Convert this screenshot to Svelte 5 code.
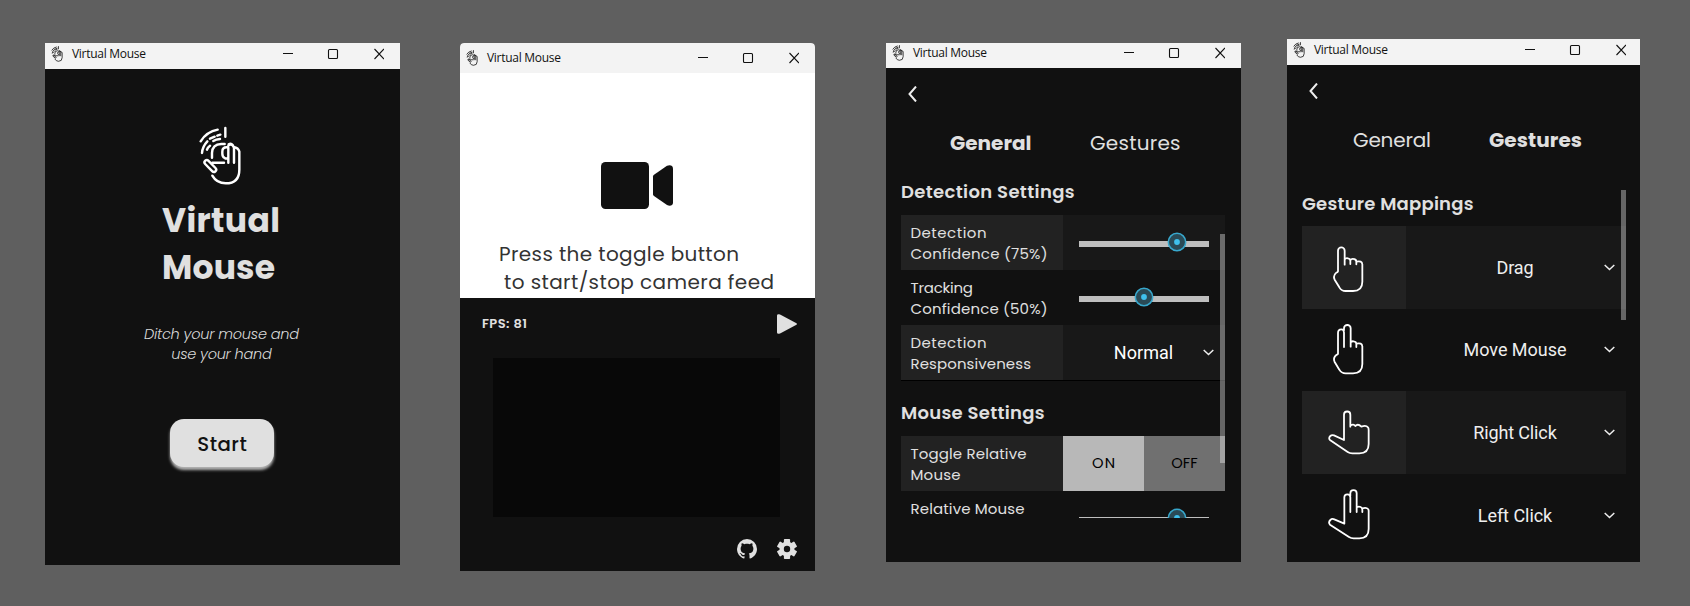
<script>
  const gestures = [
    {
      action: 'Drag', width: 37, view: '-24 -12 315 248',
      d: 'M84 124V62a10 10 0 0 1 20 0V104M104 88q4-5 10-3q7 1 7 8v9M121 91q4-6 10-4q8 1 8 8v8M139 95q17-4 18 8V155q0 28-28 28H107q-13 0-19-11L74 149q-6-12 5-21q5-1 5-5'
    },
    {
      action: 'Move Mouse', width: 103, view: '-24 236 315 248',
      d: 'M84 373V311q0-11 10-11q8 0 8 10V353M102 303V297a10 10 0 0 1 20 0V352M122 339q4-4 9-3q8 1 8 8v9M139 343q17-4 18 8V404q0 28-28 28H107q-13 0-19-11L74 398q-6-12 5-21q5-1 5-5'
    },
    {
      action: 'Right Click', width: 83.5, view: '81 303 315 248',
      d: 'M207 450V374a9.5 9.5 0 0 1 19 0V410M226 407q9-7 15 1q8-8 18 2q14-5 20 2q2 2 2 8V462q0 28-28 28H232q-8 0-14-4L166 451q-7-6 0-13q4-4 11-2L207 450'
    },
    {
      action: 'Left Click', width: 74.5, view: '81 551 315 248',
      d: 'M208 703V624q0-9 9-9q9 0 9 9V668M226 620V612a9.500 9.500 0 0 1 19 0V668M245 654q6-4 12-1q5 2 5 8v7M262 657q18-4 19 7V719q0 28-28 28H236q-8 0-14-4L165 706q-6-7 1-14q5-5 12-2L208 703'
    }
  ];

  // Spreads letters so that a line takes exactly the given width.
  function fit(node, width) {
    const natural = node.getBoundingClientRect().width;
    const step = (width - natural) / (node.textContent.length - 1);
    node.style.letterSpacing = `${step}px`;
    node.style.marginRight = `${-step}px`;
  }
</script>

{#snippet line(text, width)}<span class="line" use:fit={width}>{text}</span>{/snippet}

{#snippet hand(cls, stroke)}
  <svg class={cls} viewBox="57 33 126 180" fill="none" stroke="currentColor" stroke-width={stroke} stroke-linecap="round" stroke-linejoin="round">
    <path d="M136 39V65M62 79Q80 50 113 44M66 114Q67 95 82 79M81 104Q83 97 90 92M90 71l14-6M100 78q8-5 20-6M112 62l9-3" />
    <path d="M96 128V114Q97 88 124 87H134M97 143H132" />
    <rect x="69" y="146" width="44" height="14" rx="7" transform="rotate(46 91 153)" />
    <path d="M145 143V98M145 128q-5 5-11 1q-7-4-7-13v-6q0-13 13-13M145 92q7-7 13-1l4 7V143M146 88q10-6 15 8q14 2 17 14V164q0 41-41 41q-27 0-40-23" />
  </svg>
{/snippet}

{#snippet titlebar(height, offset)}
  <header class="titlebar" style="height:{height}px;padding-bottom:{offset}px">
    {@render hand('app-icon', 9)}
    <span class="app-name">{@render line('Virtual Mouse', 74)}</span>
    <svg class="controls" viewBox="0 0 101 12" fill="none" stroke="#111" stroke-width="1.100">
      <path d="M0 5.500H10M91.500 1L101 11M101 1L91.500 11" />
      <rect x="45.500" y="1.500" width="9" height="9" rx="1" />
    </svg>
  </header>
{/snippet}

{#snippet back()}
  <svg class="back" viewBox="0 0 9 16" fill="none" stroke="#eee" stroke-width="2"><path d="M8 .5L1.500 8L8 15.500" /></svg>
{/snippet}

{#snippet chevron()}
  <svg class="chevron" viewBox="0 0 11 7" fill="none" stroke="#eee" stroke-width="1.500"><path d="M.7 1L5.500 5.500L10.300 1" /></svg>
{/snippet}

{#snippet slider(value)}
  <div class="value slider">
    <div class="track">
      <svg class="thumb" style="left:{value}%" viewBox="0 0 20 20">
        <circle cx="10" cy="10" r="8.700" fill="#2a4a56" stroke="#38a8cd" stroke-width="1.500" />
        <circle cx="10" cy="10" r="2.900" fill="#3fc0ec" />
      </svg>
    </div>
  </div>
{/snippet}

<main>
  <section class="window w1">
    {@render titlebar(26, 5)}
    <div class="welcome">
      {@render hand('logo', 7.3)}
      <h1>{@render line('Virtual', 118)}<br />{@render line('Mouse', 113)}</h1>
      <p>{@render line('Ditch your mouse and', 155)}<br />{@render line('use your hand', 100.5)}</p>
      <button class="start">{@render line('Start', 49.5)}</button>
    </div>
  </section>

  <section class="window w2">
    {@render titlebar(30, 1)}
    <div class="feed">
      <svg class="camera" viewBox="0 0 72 47" fill="#111">
        <rect width="48" height="47" rx="4.500" />
        <path d="M52 14.500Q52 13.500 53 12.800L66 3.800Q69 2.500 71 4Q72 5 72 6.500V40.500Q72 42 71 43Q69 44.500 66 43L53 34Q52 33.300 52 32.500Z" />
      </svg>
      <div class="hint">{@render line('Press the toggle button', 240)}<br /><span class="indent">{@render line('to start/stop camera feed', 270)}</span></div>
    </div>
    <div class="panel">
      <div class="status">
        <span class="fps">{@render line('FPS: 81', 45)}</span>
        <svg width="20" height="20" viewBox="0 0 20 20" fill="#e0e0e0"><path d="M0 1.500Q0 0 2 .2Q3 .3 4 .9L19 8.900Q21 10 19 11.100L4 19.100Q3 19.700 2 19.800Q0 20 0 18.500Z" /></svg>
      </div>
      <div class="console"></div>
      <div class="links">
        <svg width="20" height="20" viewBox="2 2 20 20" fill="#e0e0e0"><path d="M12,2A10,10 0 0,0 2,12C2,16.42 4.87,20.17 8.84,21.5C9.34,21.58 9.5,21.27 9.5,21C9.5,20.77 9.5,20.14 9.5,19.31C6.73,19.91 6.14,17.97 6.14,17.97C5.68,16.81 5.03,16.5 5.03,16.5C4.12,15.88 5.1,15.9 5.1,15.9C6.1,15.97 6.63,16.93 6.63,16.93C7.5,18.45 8.97,18 9.54,17.76C9.63,17.11 9.89,16.67 10.17,16.42C7.95,16.17 5.62,15.31 5.62,11.5C5.62,10.39 6,9.5 6.65,8.79C6.55,8.54 6.2,7.5 6.75,6.15C6.75,6.15 7.59,5.88 9.5,7.17C10.29,6.95 11.15,6.84 12,6.84C12.85,6.84 13.71,6.95 14.5,7.17C16.41,5.88 17.25,6.15 17.25,6.15C17.8,7.5 17.45,8.54 17.35,8.79C18,9.5 18.38,10.39 18.38,11.5C18.38,15.32 16.04,16.16 13.81,16.41C14.17,16.72 14.5,17.33 14.5,18.26C14.5,19.6 14.5,20.68 14.5,21C14.5,21.27 14.66,21.59 15.17,21.5C19.14,20.16 22,16.42 22,12A10,10 0 0,0 12,2Z" /></svg>
        <svg width="20" height="20" viewBox="0 0 20 20" fill="#e0e0e0">
          <circle cx="10" cy="10" r="7.500" />
          {#each [0, 60, 120] as angle}
            <rect x="6.900" y="0" width="6.200" height="20" rx=".8" transform="rotate({angle} 10 10)" />
          {/each}
          <circle cx="10" cy="10" r="3.200" fill="#111" />
        </svg>
      </div>
    </div>
  </section>

  <section class="window w3">
    {@render titlebar(25, 6)}
    {@render back()}
    <nav><b>{@render line('General', 81.5)}</b><span>{@render line('Gestures', 90.5)}</span></nav>
    <div class="scroll">
      <h2>{@render line('Detection Settings', 173.5)}</h2>
      <div class="row shaded">
        <div class="label">{@render line('Detection', 76)}<br />{@render line('Confidence (75%)', 137)}</div>
        {@render slider(75)}
      </div>
      <div class="row">
        <div class="label">{@render line('Tracking', 62.5)}<br />{@render line('Confidence (50%)', 137)}</div>
        {@render slider(50)}
      </div>
      <div class="row shaded">
        <div class="label">{@render line('Detection', 76)}<br />{@render line('Responsiveness', 120.5)}</div>
        <div class="value select"><span>{@render line('Normal', 59.5)}</span>{@render chevron()}</div>
      </div>
      <h2 class="second">{@render line('Mouse Settings', 143.5)}</h2>
      <div class="row shaded">
        <div class="label">{@render line('Toggle Relative', 116)}<br />{@render line('Mouse', 50)}</div>
        <div class="value toggle"><span class="on">{@render line('ON', 23)}</span><span class="off">{@render line('OFF', 26.5)}</span></div>
      </div>
      <div class="row">
        <div class="label">{@render line('Relative Mouse', 114)}</div>
        {@render slider(75)}
      </div>
    </div>
    <div class="scrollbar"></div>
  </section>

  <section class="window w4">
    {@render titlebar(26, 5)}
    {@render back()}
    <nav><span>{@render line('General', 78)}</span><b>{@render line('Gestures', 93)}</b></nav>
    <div class="scroll">
      <h2>{@render line('Gesture Mappings', 171.5)}</h2>
      {#each gestures as g, i}
        <div class="row" class:shaded={i % 2 === 0}>
          <div class="gesture">
            <svg viewBox={g.view} fill="none" stroke="#fff" stroke-width="5.400" stroke-linejoin="round" stroke-linecap="round"><path d={g.d} /></svg>
          </div>
          <div class="select"><span>{@render line(g.action, g.width)}</span>{@render chevron()}</div>
        </div>
      {/each}
    </div>
    <div class="scrollbar"></div>
  </section>
</main>

<style>
  :global(body) { margin: 0; background: #5f5f5f; }
  * { box-sizing: border-box; }
  main {
    display: flex; align-items: flex-start; width: 1690px; height: 606px;
    padding: 39px 0 0 45px; background: #5f5f5f; color: #e0e0e0; overflow: hidden;
    font-family: Poppins, Inter, sans-serif; font-feature-settings: 'cv11';
  }
  svg { display: block; flex: none; }
  .line { display: inline-block; white-space: pre; vertical-align: top; }
  .window { position: relative; flex: none; width: 355px; background: #111; overflow: hidden; }
  .w1 { height: 522px; margin: 4px 60px 0 0; }
  .w2 { height: 528px; margin: 4px 71px 0 0; border-radius: 4px 4px 0 0; }
  .w3 { height: 519px; margin: 4px 46px 0 0; }
  .w4 { width: 353px; height: 523px; }

  .titlebar { display: flex; align-items: center; padding: 0 16px 0 6px; background: #f3f3f3; color: #111; }
  .w4 .titlebar { padding-right: 14px; }
  .titlebar :global(.app-icon) { width: 12px; height: 16px; }
  .app-name { margin-left: 9px; font: 12px/18px 'Open Sans', sans-serif; color: #111; }
  .controls { width: 101px; height: 12px; margin-left: auto; }

  .welcome { display: flex; flex-direction: column; align-items: center; padding-top: 57px; }
  .welcome :global(.logo) { width: 42px; height: 60px; margin-right: 5px; color: #fff; }
  h1 { width: 118px; margin: 10.500px 3px 0 0; font-size: 33px; line-height: 47px; font-weight: 700; }
  p { margin: 33.400px 2px 0 0; text-align: center; font-size: 14.500px; line-height: 20px; font-weight: 300; font-style: italic; color: #d8d8d8; }
  .start {
    width: 104px; height: 48px; margin-top: 55px; padding: 1px 0 0; border: 0; border-radius: 14px; margin-right: 1px;
    background: #e0e0e0; box-shadow: 0 3px 3px #b4b4b4; color: #111;
    font: 500 19.800px/48px Poppins, Inter, sans-serif; font-feature-settings: 'cv11';
  }

  .feed { height: 225px; padding: 89px 0 0 39px; background: #fff; color: #333; overflow: hidden; }
  .camera { width: 72px; height: 47px; margin-left: 102px; }
  .hint { margin-top: 31px; font-size: 20px; line-height: 28px; white-space: nowrap; }
  .indent { padding-left: 5px; }
  .panel { padding: 16px 18px 0 22px; }
  .status { display: flex; justify-content: space-between; align-items: center; }
  .fps { font-size: 13px; line-height: 20px; font-weight: 600; }
  .console { width: 287px; height: 159px; margin: 24px 0 22px 11px; background: #080808; }
  .links { display: flex; justify-content: flex-end; gap: 20px; }

  .back { width: 9px; height: 16px; margin: 18px 0 0 21.500px; }
  nav { display: flex; margin-top: 26px; padding-left: 64px; font-size: 20px; line-height: 30px; white-space: nowrap; }
  nav > :first-child { width: 140px; }
  .w4 nav { padding-left: 66px; }
  .w4 nav > :first-child { width: 136px; }
  nav b { font-weight: 700; }
  .scroll { height: 340px; margin: 20px 16px 0 15px; overflow: hidden; }
  .w4 .scroll { height: 372px; margin: 35px 14px 0 15px; }
  h2 { margin: 0; height: 37px; font-size: 18px; line-height: 27px; font-weight: 600; white-space: nowrap; }
  .w4 h2 { height: 36px; }
  h2.second { height: 56px; padding-top: 18px; border-top: 1px solid #000; }
  .row { display: flex; height: 55px; }
  .label { width: 162px; padding: 6.500px 0 0 9.500px; font-size: 15px; line-height: 21px; white-space: nowrap; }
  .shaded { background: #181818; }
  .shaded .label, .shaded .gesture { background: #222; }
  .value { width: 162px; }
  .slider { padding: 26px 0 0 16px; }
  .track { position: relative; width: 130px; height: 6px; background: #bebebe; }
  .thumb { position: absolute; top: -9px; width: 20px; height: 20px; margin-left: -10px; }
  .select {
    display: flex; align-items: center; padding-right: 11px; color: #fff;
    font-family: Roboto, sans-serif; font-size: 18px;
  }
  .select > span { flex: 1; text-align: center; }
  .w3 .select { padding-left: 21px; }
  .chevron { width: 11px; height: 7px; }
  .toggle { display: flex; color: #000; font-size: 14.700px; }
  .toggle > span { flex: 1; text-align: center; line-height: 54px; }
  .on { background: #b8b8b8; }
  .off { background: #707070; }
  .w4 .row { height: 82.670px; }
  .gesture { width: 104px; }
  .gesture svg { width: 105px; height: 82.670px; margin-top: -.5px; }
  .w4 .select { flex: 1; padding: 0 11px 0 20px; color: #eee; }
  .scrollbar { position: absolute; width: 5px; background: rgba(255, 255, 255, .36); }
  .w3 .scrollbar { left: 334px; top: 191px; height: 229px; }
  .w4 .scrollbar { left: 334px; top: 151px; height: 130px; }
</style>
